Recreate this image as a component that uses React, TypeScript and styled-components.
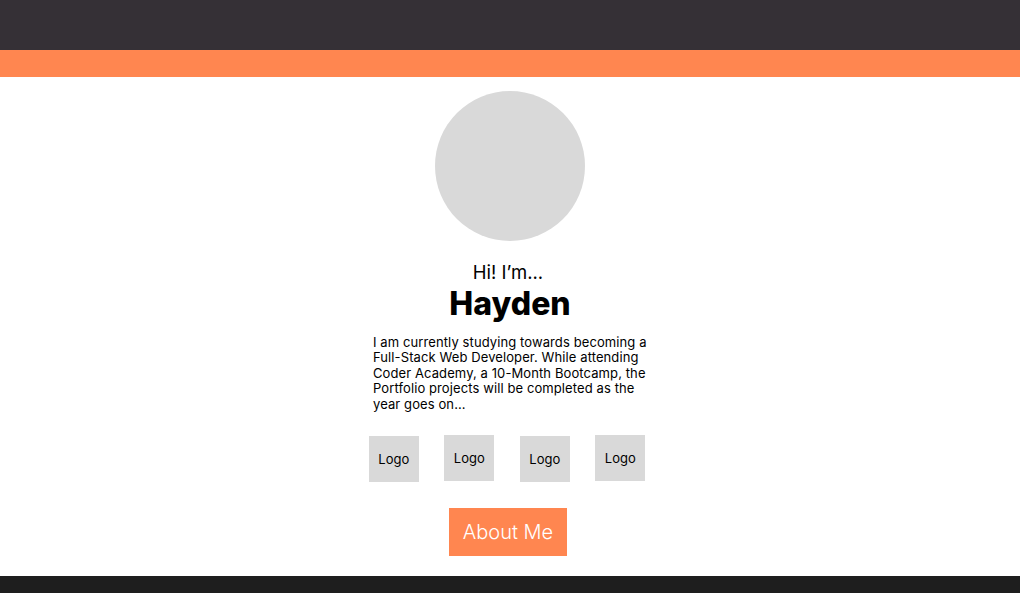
import React from "react";
import styled, { createGlobalStyle } from "styled-components";

const Global = createGlobalStyle`
  html, body { margin: 0; padding: 0; background: #ffffff; }
  body { font-family: Inter, "Noto Sans", sans-serif; }
`;

const Page = styled.div`
  display: flex;
  flex-direction: column;
  min-height: 593px;
`;

const TopBar = styled.header`
  height: 50px;
  background: #353036;
`;

const Stripe = styled.div`
  height: 27px;
  background: #ff8650;
`;

const Main = styled.main`
  flex: 1;
  display: flex;
  flex-direction: column;
  align-items: center;
  padding-top: 14px;
`;

const Avatar = styled.div`
  width: 150px;
  height: 150px;
  border-radius: 50%;
  background: #d9d9d9;
`;

const Greeting = styled.div`
  margin-top: 19px;
  font-size: 18.5px;
  line-height: 24px;
  color: #000;
  margin-right: 4px;
`;

const Name = styled.h1`
  margin: 1px 0 0;
  font-size: 32px;
  line-height: 38px;
  font-weight: 800;
  color: #000;
`;

const Bio = styled.p`
  margin: 12px 0 0;
  width: 274px;
  font-size: 13px;
  line-height: 15.4px;
  letter-spacing: 0.1px;
  color: #000;
`;

const Logos = styled.div`
  display: flex;
  gap: 25.5px;
  margin-top: 23px;
  margin-right: 6px;
`;

const LogoBox = styled.div<{ $drop: number }>`
  width: 50px;
  height: 46px;
  background: #d9d9d9;
  display: flex;
  align-items: center;
  justify-content: center;
  font-size: 13px;
  color: #000;
  margin-top: ${(p) => p.$drop}px;
  padding-top: ${(p) => p.$drop * 2}px;
  box-sizing: border-box;
`;

const Button = styled.button`
  margin-top: 26px;
  margin-right: 4px;
  width: 118px;
  height: 48px;
  border: none;
  background: #ff8650;
  color: #ffffff;
  font-family: Inter, "Noto Sans", sans-serif;
  font-size: 20px;
  font-weight: 300;
  cursor: pointer;
`;

const Footer = styled.footer`
  height: 17px;
  background: #1e1e1e;
`;

export default function App() {
  return (
    <>
      <Global />
      <Page>
        <TopBar />
        <Stripe />
        <Main>
          <Avatar />
          <Greeting>Hi! I’m...</Greeting>
          <Name>Hayden</Name>
          <Bio>
            I am currently studying towards becoming a Full-Stack Web Developer. While attending
            Coder Academy, a 10-Month Bootcamp, the Portfolio projects will be completed as the
            year goes on...
          </Bio>
          <Logos>
            <LogoBox $drop={0.5}>Logo</LogoBox>
            <LogoBox $drop={0}>Logo</LogoBox>
            <LogoBox $drop={0.5}>Logo</LogoBox>
            <LogoBox $drop={0}>Logo</LogoBox>
          </Logos>
          <Button>About Me</Button>
        </Main>
        <Footer />
      </Page>
    </>
  );
}
